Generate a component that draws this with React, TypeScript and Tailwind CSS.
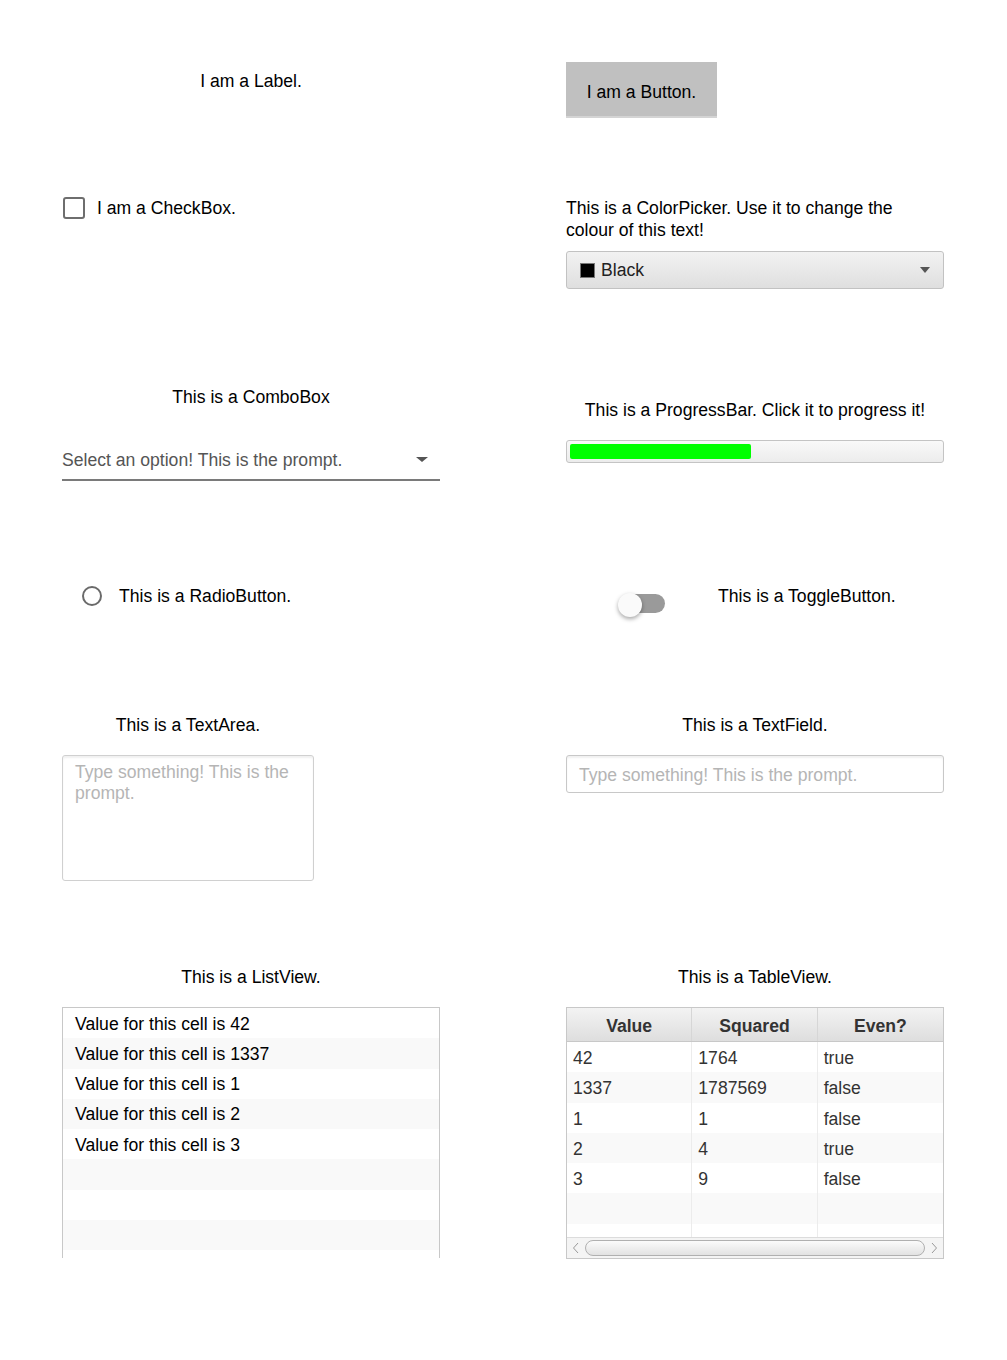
import React from "react";

const listItems = [42, 1337, 1, 2, 3];
const tableRows = [
  ["42", "1764", "true"],
  ["1337", "1787569", "false"],
  ["1", "1", "false"],
  ["2", "4", "true"],
  ["3", "9", "false"],
];

export default function App() {
  return (
    <div className="min-h-[1360px] bg-white font-['Liberation_Sans',Arial,sans-serif] text-[17.6px] leading-[20px] text-black pl-[62px] pt-[62px]">
      {/* Row 1 */}
      <div className="flex gap-[126px] h-[128px]">
        <div className="w-[378px] pt-[9px] text-center">I am a Label.</div>
        <div className="w-[378px]">
          <div className="w-[151px] h-[56px] bg-[#c0c0c0] border-b-2 border-[#d4d4d4] flex items-center justify-center pt-[5px]">
            I am a Button.
          </div>
        </div>
      </div>

      {/* Row 2 */}
      <div className="flex gap-[126px] h-[190px]">
        <div className="w-[378px]">
          <div className="flex items-center mt-[7px] ml-[1px] gap-[12px] h-[22px]">
            <div className="w-[22px] h-[22px] border-2 border-[#6e6e6e] rounded-[3px] bg-white" />
            <span>I am a CheckBox.</span>
          </div>
        </div>
        <div className="w-[378px]">
          <p className="mt-[7px] leading-[22px]">
            This is a ColorPicker. Use it to change the colour of this text!
          </p>
          <div className="mt-[10px] h-[38px] border border-[#c2c2c2] rounded-[3px] bg-gradient-to-b from-[#f2f2f2] to-[#dfdfdf] flex items-center pl-[13px] pr-[13px]">
            <div className="w-[15px] h-[15px] bg-black border border-[#777]" />
            <span className="ml-[6px] text-[#222]">Black</span>
            <div className="ml-auto w-0 h-0 border-l-[5px] border-r-[5px] border-t-[6px] border-l-transparent border-r-transparent border-t-[#555]" />
          </div>
        </div>
      </div>

      {/* Row 3 */}
      <div className="flex gap-[126px] h-[200px]">
        <div className="w-[378px]">
          <div className="mt-[7px] text-center">This is a ComboBox</div>
          <div className="mt-[33px] h-[41px] border-b-2 border-[#7a7a7a] flex items-center pr-[12px] text-[#555]">
            <span>Select an option! This is the prompt.</span>
            <div className="ml-auto w-0 h-0 border-l-[6px] border-r-[6px] border-t-[5px] border-l-transparent border-r-transparent border-t-[#555]" />
          </div>
        </div>
        <div className="w-[378px]">
          <div className="mt-[20px] text-center">This is a ProgressBar. Click it to progress it!</div>
          <div className="mt-[20px] h-[23px] border border-[#c4c4c4] rounded-[3px] bg-gradient-to-b from-[#f9f9f9] to-[#ececec] p-[3px]">
            <div className="h-full w-[181px] bg-[#00ff00] rounded-[2px]" />
          </div>
        </div>
      </div>

      {/* Row 4 */}
      <div className="flex gap-[126px] h-[130px]">
        <div className="w-[378px]">
          <div className="flex items-center mt-[6px] h-[20px]">
            <div className="ml-[20px] w-[20px] h-[20px] rounded-full border-[2.5px] border-[#6a6a6a]" />
            <span className="ml-[17px]">This is a RadioButton.</span>
          </div>
        </div>
        <div className="w-[378px] flex items-start">
          <div className="relative ml-[52px] mt-[13px] w-[47px] h-[24px]">
            <div className="ml-[2px] mt-[1px] w-[45px] h-[19px] rounded-full bg-[#9a9a9a]" />
            <div className="absolute left-0 top-0 w-[24px] h-[24px] rounded-full bg-[#fafafa] shadow-[0_2px_4px_rgba(0,0,0,0.35)]" />
          </div>
          <span className="ml-[53px] mt-[6px]">This is a ToggleButton.</span>
        </div>
      </div>

      {/* Row 5 */}
      <div className="flex gap-[126px] h-[250px]">
        <div className="w-[378px]">
          <div className="w-[252px]">
            <div className="mt-[5px] text-center">This is a TextArea.</div>
            <div className="mt-[20px] h-[126px] border border-[#d0d0d0] rounded-[3px] shadow-[inset_0_2px_2px_rgba(0,0,0,0.06)] px-[12px] pt-[6px] leading-[21px] text-[#b5b5b5]">
              Type something! This is the prompt.
            </div>
          </div>
        </div>
        <div className="w-[378px]">
          <div className="mt-[5px] text-center">This is a TextField.</div>
          <div className="mt-[20px] h-[38px] border border-[#c8c8c8] rounded-[3px] shadow-[inset_0_2px_2px_rgba(0,0,0,0.06)] flex items-center px-[12px] pt-[1px] text-[#b5b5b5]">
            Type something! This is the prompt.
          </div>
        </div>
      </div>

      {/* Row 6 */}
      <div className="flex gap-[126px]">
        <div className="w-[378px]">
          <div className="mt-[7px] text-center">This is a ListView.</div>
          <div className="mt-[20px] h-[251px] border border-b-0 border-[#c8c8c8] overflow-hidden">
            {Array.from({ length: 9 }).map((_, i) => (
              <div
                key={i}
                className={`h-[30.25px] flex items-center pl-[12px] pt-[1px] ${i % 2 === 1 ? "bg-[#f9f9f9]" : "bg-white"}`}
              >
                {i < listItems.length ? `Value for this cell is ${listItems[i]}` : ""}
              </div>
            ))}
          </div>
        </div>
        <div className="w-[378px]">
          <div className="mt-[7px] text-center">This is a TableView.</div>
          <div className="mt-[20px] h-[252px] border border-[#c8c8c8] flex flex-col overflow-hidden">
            <div className="h-[34px] shrink-0 grid grid-cols-3 bg-gradient-to-b from-[#f3f3f3] to-[#dedede] border-b border-[#c8c8c8] font-bold text-[#333]">
              {["Value", "Squared", "Even?"].map((h, i) => (
                <div
                  key={h}
                  className={`flex items-center justify-center pt-[3px] ${i < 2 ? "border-r border-[#d6d6d6]" : ""}`}
                >
                  {h}
                </div>
              ))}
            </div>
            <div className="flex-1 overflow-hidden">
              {Array.from({ length: 7 }).map((_, r) => (
                <div
                  key={r}
                  className={`h-[30.3px] grid grid-cols-3 text-[#333] ${r % 2 === 1 ? "bg-[#f9f9f9]" : "bg-white"}`}
                >
                  {[0, 1, 2].map((c) => (
                    <div
                      key={c}
                      className={`flex items-center pl-[6px] pt-[2px] ${c < 2 ? "border-r border-[#ececec]" : ""}`}
                    >
                      {r < tableRows.length ? tableRows[r][c] : ""}
                    </div>
                  ))}
                </div>
              ))}
            </div>
            <div className="h-[21px] shrink-0 border-t border-[#dcdcdc] bg-[#f4f4f4] flex items-center px-[4px]">
              <svg width="10" height="12" viewBox="0 0 10 12" className="shrink-0">
                <path d="M7 1 L2.5 6 L7 11" fill="none" stroke="#999" strokeWidth="1" />
              </svg>
              <div className="mx-[4px] flex-1 h-[16px] rounded-[8px] border border-[#b0b0b0] bg-gradient-to-b from-[#fbfbfb] to-[#e2e2e2]" />
              <svg width="10" height="12" viewBox="0 0 10 12" className="shrink-0">
                <path d="M3 1 L7.5 6 L3 11" fill="none" stroke="#999" strokeWidth="1" />
              </svg>
            </div>
          </div>
        </div>
      </div>
    </div>
  );
}
